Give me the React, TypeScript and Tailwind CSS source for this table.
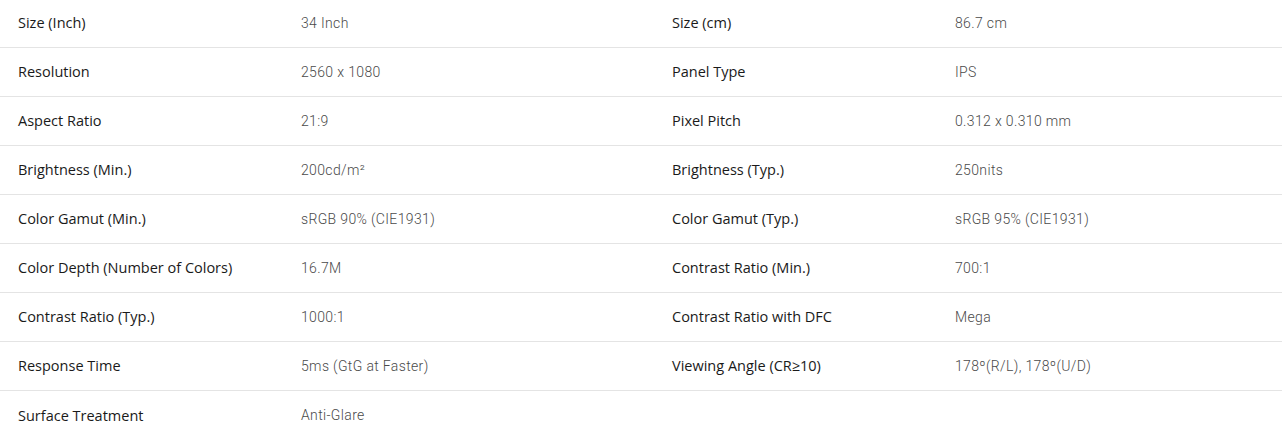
import React from "react";

const rows: [string, string, string?, string?][] = [
  ["Size (Inch)", "34 Inch", "Size (cm)", "86.7 cm"],
  ["Resolution", "2560 x 1080", "Panel Type", "IPS"],
  ["Aspect Ratio", "21:9", "Pixel Pitch", "0.312 x 0.310 mm"],
  ["Brightness (Min.)", "200cd/m²", "Brightness (Typ.)", "250nits"],
  ["Color Gamut (Min.)", "sRGB 90% (CIE1931)", "Color Gamut (Typ.)", "sRGB 95% (CIE1931)"],
  ["Color Depth (Number of Colors)", "16.7M", "Contrast Ratio (Min.)", "700:1"],
  ["Contrast Ratio (Typ.)", "1000:1", "Contrast Ratio with DFC", "Mega"],
  ["Response Time", "5ms (GtG at Faster)", "Viewing Angle (CR≥10)", "178º(R/L), 178º(U/D)"],
  ["Surface Treatment", "Anti-Glare"],
];

export default function App() {
  return (
    <div className="w-[1282px] h-[438px] bg-white overflow-hidden">
      <div className="-mt-px">
        {rows.map((r, i) => (
          <div
            key={i}
            className={`grid grid-cols-[283px_371px_283px_1fr] h-[49px] items-center ${
              i < rows.length - 1 ? "border-b border-[#e4e4e4]" : ""
            }`}
          >
            <div className="pl-[18px] text-[14.5px] text-[#1a1a1a] font-['Open_Sans',sans-serif]">
              {r[0]}
            </div>
            <div className="pl-[18px] text-[14px] text-[#4a4a4a] font-light tracking-[0.35px] font-['Roboto',sans-serif]">
              {r[1]}
            </div>
            <div className="pl-[18px] text-[14.5px] text-[#1a1a1a] font-['Open_Sans',sans-serif]">
              {r[2] ?? ""}
            </div>
            <div className="pl-[18px] text-[14px] text-[#4a4a4a] font-light tracking-[0.35px] font-['Roboto',sans-serif]">
              {r[3] ?? ""}
            </div>
          </div>
        ))}
      </div>
    </div>
  );
}
